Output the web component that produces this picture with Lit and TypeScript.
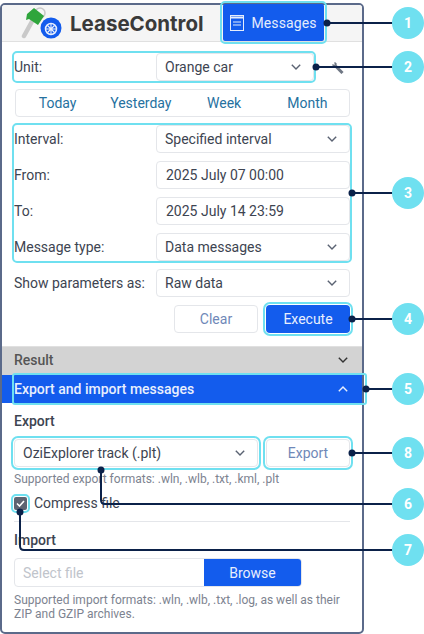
import { LitElement, html, css, svg } from "lit";
import { customElement } from "lit/decorators.js";

const chevron = html`<svg class="chev" width="10" height="6" viewBox="0 0 10 6"><path d="M.8.8 5 5 9.200.8" fill="none" stroke="currentColor" stroke-width="1.4"/></svg>`;

const callouts: [number, number][] = [
  [23, 327], [67, 316], [193, 352], [319, 352], [389, 366], [453, 352],
];

@customElement("app-root")
export class AppRoot extends LitElement {
  static styles = css`
    :host { display: block; position: relative; width: 424px; height: 634px; padding-top: 3px; box-sizing: border-box; overflow: hidden; background: #fff;
      font-family: Roboto, "Liberation Sans", sans-serif; font-size: 14px; color: #3d4451; }
    * { box-sizing: border-box; }
    .panel { width: 364px; height: 631px; border: 2px solid #5b6a8a; border-radius: 5px; background: #fff; }
    .header { height: 37px; display: flex; align-items: stretch; background: #f5f5f5; border-bottom: 1px solid #e0e0e0; border-radius: 3px 3px 0 0; padding-left: 19px; }
    .logo { display: flex; align-items: center; width: 202px; }
    .logo svg { margin-right: 7px; flex: none; }
    .logo span { font-family: Inter, sans-serif; font-weight: 700; font-size: 20.5px; color: #3a3a3a; }
    .tab { width: 101px; height: 37px; margin-top: -1px; background: #135ced; color: #e4ecfc; display: flex; align-items: center; justify-content: center; gap: 7px; font-size: 14px; letter-spacing: 0.1px; }
    .hl { outline: 2px solid #6fe0f0; outline-offset: 1px; border-radius: 2px; }
    .hl0 { outline: 2px solid #6fe0f0; border-radius: 3px; }
    .form { padding: 11px 12px 13px; display: flex; flex-direction: column; gap: 8px; }
    .row { display: grid; grid-template-columns: 142px 194px; align-items: center; }
    .unit { grid-template-columns: 142px 158px; width: 300px; }
    .unitwrap { display: flex; align-items: center; }
    .wrench { margin-left: 17px; flex: none; }
    .group { display: flex; flex-direction: column; gap: 8px; }
    .field { height: 28px; border: 1px solid #e4e6ea; border-radius: 4px; background: #fff; display: flex; align-items: center; justify-content: space-between; padding: 0 12px 0 8px; color: #3d4451; }
    .field.input { padding-left: 9px; }
    .chev { color: #5a6272; flex: none; }
    .quick { height: 28px; border: 1px solid #e4e6ea; border-radius: 4px; display: grid; grid-template-columns: repeat(4, 1fr); text-align: center; align-items: center; color: #26719f; margin-left: 1px; }
    .actions { display: flex; justify-content: flex-end; gap: 8px; }
    .btn { height: 28px; width: 84px; border-radius: 4px; display: flex; align-items: center; justify-content: center; }
    .ghost { border: 1px solid #e4e6ea; color: #6f88b8; background: #fff; }
    .primary { background: #135ced; color: #e8effd; }
    .bar { display: flex; align-items: center; justify-content: space-between; padding: 0 14px 0 12px; font-weight: 500; }
    .result { height: 29px; background: #d3d3d3; color: #555; border-top: 1px solid #e0e0e0; padding-bottom: 2px; }
    .result .chev { color: #333; }
    .exp { height: 28px; background: #135ced; color: #e8effd; position: relative; }
    .exp::after { content: ""; position: absolute; left: 10px; right: -5px; top: -2px; bottom: -2px; border: 2px solid #6fe0f0; border-radius: 3px; }
    .exp .chev { color: #e8effd; }
    .section { padding: 0 12px; }
    h4 { margin: 0; font-size: 14px; font-weight: 500; color: #3d4451; line-height: 16px; }
    .exporth { margin-top: 10px; }
    .exportrow { display: flex; gap: 8px; margin-top: 10px; }
    .exportrow .field { width: 244px; }
    .help { font-size: 12px; color: #7d8390; line-height: 14px; }
    .help1 { margin-top: 5px; }
    .help2 { margin-top: 6px; }
    .check { display: flex; align-items: center; gap: 7px; margin-top: 10px; height: 14px; }
    .box { width: 13px; height: 13px; border-radius: 2px; background: #5e6472; display: flex; align-items: center; justify-content: center; }
    hr { border: 0; border-top: 1px solid #e4e6ea; margin: 11px 0 0; }
    .importh { margin-top: 10px; }
    .file { display: flex; width: 288px; height: 29px; margin-top: 10px; border: 1px solid #e4e6ea; border-radius: 4px; overflow: hidden; }
    .placeholder { flex: 1; padding-left: 8px; color: #c0c4cb; align-self: center; }
    .browse { width: 97px; background: #135ced; color: #e8effd; display: flex; align-items: center; justify-content: center; }
    .overlay { position: absolute; left: 0; top: 0; pointer-events: none; }
    .overlay text { font: 700 14px Roboto, sans-serif; fill: #fff; text-anchor: middle; }
  `;

  render() {
    return html`
      <div class="panel">
        <div class="header">
          <div class="logo">
            <svg width="42" height="32" viewBox="0 0 42 32">
              <path d="M3 29 14 9" stroke="#c9c9c9" stroke-width="4.5" stroke-linecap="round" fill="none"/>
              <circle cx="19" cy="6" r="5" fill="none" stroke="#c9c9c9" stroke-width="1.6"/>
              <path d="M6 7 13 1l10 8-6 9-9-6-3 1z" fill="#2fa53c"/>
              <circle cx="30" cy="21" r="10.500" fill="#135ced"/>
              <circle cx="30" cy="22" r="5.500" fill="none" stroke="#e8effd" stroke-width="1.5"/>
              <path d="M30 17v10M25 22h10M26.500 18.500l7 7M33.500 18.500l-7 7" stroke="#e8effd" stroke-width="1.100"/>
            </svg>
            <span>LeaseControl</span>
          </div>
          <div class="tab hl">
            <svg width="14" height="17" viewBox="0 0 14 17" fill="none" stroke="#e4ecfc"><rect x=".5" y="1.500" width="13" height="15"/><path d="M.5 3.500h13" stroke-width="2"/><path d="M3 8h8M3 11h8" /></svg>
            <span>Messages</span>
          </div>
        </div>
        <div class="form">
          <div class="unitwrap">
            <div class="row unit hl0"><span>Unit:</span><div class="field"><span>Orange car</span>${chevron}</div></div>
            <svg class="wrench" width="13" height="13" viewBox="0 0 13 13" fill="none" stroke="#6f7784"><path d="M4 4.500 11.500 12" stroke-width="3"/><path d="M1.500 3.500 3 5 5 3 3.500 1.500" stroke-width="1.500"/></svg>
          </div>
          <div class="quick"><span>Today</span><span>Yesterday</span><span>Week</span><span>Month</span></div>
          <div class="group hl0">
            <div class="row"><span>Interval:</span><div class="field"><span>Specified interval</span>${chevron}</div></div>
            <div class="row"><span>From:</span><div class="field input"><span>2025 July 07 00:00</span></div></div>
            <div class="row"><span>To:</span><div class="field input"><span>2025 July 14 23:59</span></div></div>
            <div class="row"><span>Message type:</span><div class="field"><span>Data messages</span>${chevron}</div></div>
          </div>
          <div class="row"><span>Show parameters as:</span><div class="field"><span>Raw data</span>${chevron}</div></div>
          <div class="actions">
            <div class="btn ghost">Clear</div>
            <div class="btn primary hl">Execute</div>
          </div>
        </div>
        <div class="bar result"><span>Result</span>${chevron}</div>
        <div class="bar exp"><span>Export and import messages</span><svg class="chev" width="10" height="6" viewBox="0 0 10 6"><path d="M.8 5.200 5 1l4.200 4.200" fill="none" stroke="currentColor" stroke-width="1.400"/></svg></div>
        <div class="section">
          <h4 class="exporth">Export</h4>
          <div class="exportrow">
            <div class="field hl"><span>OziExplorer track (.plt)</span>${chevron}</div>
            <div class="btn ghost hl">Export</div>
          </div>
          <div class="help help1">Supported export formats: .wln, .wlb, .txt, .kml, .plt</div>
          <div class="check">
            <span class="box hl"><svg width="9" height="7" viewBox="0 0 9 7"><path d="M1 3.500 3.500 6 8 1" fill="none" stroke="#fff" stroke-width="1.600"/></svg></span>
            <span>Compress file</span>
          </div>
          <hr />
          <h4 class="importh">Import</h4>
          <div class="file"><span class="placeholder">Select file</span><span class="browse">Browse</span></div>
          <div class="help help2">Supported import formats: .wln, .wlb, .txt, .log, as well as their ZIP and GZIP archives.</div>
        </div>
      </div>
      <svg class="overlay" width="424" height="634" viewBox="0 0 424 634">
        ${callouts.map(([y, x]) => svg`<path d="M${x} ${y}H400" stroke="#0b2149" stroke-width="2"/><circle cx=${x} cy=${y} r="3.500" fill="#0b2149"/>`)}
        <path d="M101 470V500q0 4 4 4H400" stroke="#0b2149" stroke-width="2" fill="none"/><circle cx="101" cy="470" r="3.500" fill="#0b2149"/>
        <path d="M20 512V546q0 4 4 4H400" stroke="#0b2149" stroke-width="2" fill="none"/><circle cx="20" cy="512" r="3.500" fill="#0b2149"/>
        ${([[23, "1"], [67, "2"], [193, "3"], [319, "4"], [389, "5"], [453, "8"], [504, "6"], [550, "7"]] as [number, string][]).map(([y, n]) => svg`<circle cx="408" cy=${y} r="16" fill="#6fe0f0"/><text x="408" y=${y + 5}>${n}</text>`)}
      </svg>
    `;
  }
}
